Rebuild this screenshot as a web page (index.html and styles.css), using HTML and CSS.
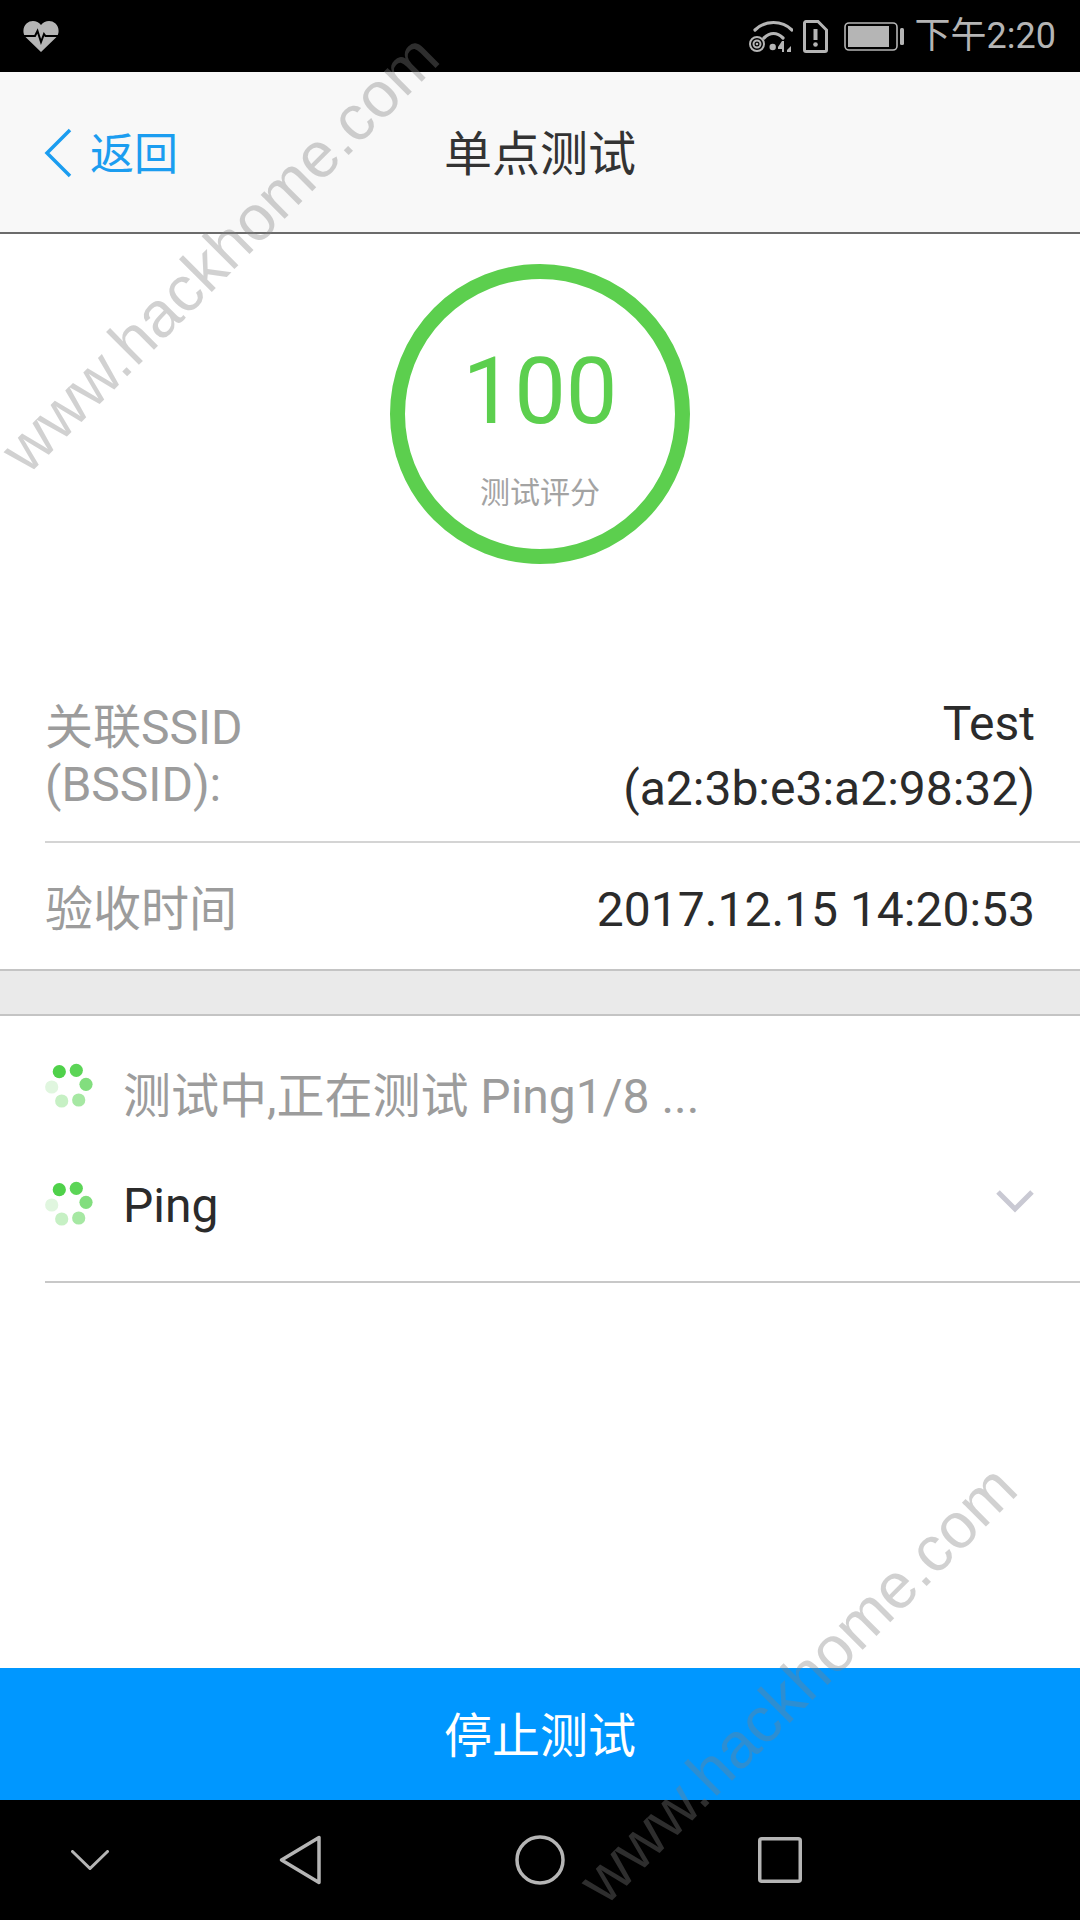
FILE: index.html
```html
<!DOCTYPE html>
<html lang="zh-CN">
<head>
<meta charset="utf-8">
<title>单点测试</title>
<link rel="stylesheet" href="styles.css">
</head>
<body>
<div class="screen">
  <div class="status">
    <svg class="heart" viewBox="0 0 36 32"><path d="M18 32 3 17.500C-1 13.500 0 6.500 3.500 3.500 8 -.5 14.500 .5 18 5 21.500 .5 28 -.5 32.500 3.500 36 6.500 37 13.500 33 17.500Z" fill="#b5b5b5"/><path d="M1 16h11l2.500-5 3.500 11 3-8 1.500 2H35" fill="none" stroke="#000" stroke-width="2"/></svg>
    <div class="status-right">
      <svg class="wifi" viewBox="0 0 44 32"><g fill="none" stroke="#b5b5b5" stroke-width="3.200" stroke-linecap="round"><path d="M6 10C16 0 33 0 43 10"/><path d="M15 18C21 12 28 12 34 18"/></g><g fill="none" stroke="#b5b5b5" stroke-width="2"><circle cx="8" cy="24" r="7"/><circle cx="8" cy="24" r="3.500"/></g><circle cx="8" cy="24" r="1.300" fill="#b5b5b5"/><circle cx="23.700" cy="27" r="3.200" fill="#b5b5b5"/><path d="M35 21v11h-2v-3h-4v-2l4-6zM38 30l4-4v6h-4z" fill="#b5b5b5"/></svg>
      <svg class="sim" viewBox="0 0 25 33"><path d="M3 1.500h12L23.500 10v20a1.500 1.500 0 0 1-1.500 1.500H3A1.500 1.500 0 0 1 1.500 30V3A1.500 1.500 0 0 1 3 1.500Z" fill="none" stroke="#b5b5b5" stroke-width="3"/><rect x="10.500" y="9" width="4" height="11" fill="#b5b5b5"/><circle cx="12.500" cy="24.500" r="2.300" fill="#b5b5b5"/></svg>
      <svg class="battery" viewBox="0 0 60 29"><rect x="1" y="1" width="52" height="27" rx="4" fill="none" stroke="#b5b5b5" stroke-width="1.600"/><rect x="4" y="4" width="41" height="21" fill="#b5b5b5"/><rect x="56" y="6" width="4" height="17" rx="1.500" fill="#b5b5b5"/></svg>
      <span class="time">下午2:20</span>
    </div>
  </div>

  <header class="nav">
    <div class="back">
      <svg class="back-icon" viewBox="0 0 28 50"><path d="M26 2 3 25l23 23" fill="none" stroke="#1b9df0" stroke-width="3.500"/></svg>
      <span class="back-text">返回</span>
    </div>
    <h1 class="title">单点测试</h1>
  </header>

  <section class="score">
    <div class="ring">
      <div class="ring-num">100</div>
      <div class="ring-label">测试评分</div>
    </div>
  </section>

  <section class="info">
    <div class="row row-ssid">
      <div class="label label-ssid">关联SSID<br>(BSSID):</div>
      <div class="value value-ssid">Test<br>(a2:3b:e3:a2:98:32)</div>
    </div>
    <div class="row row-time">
      <div class="label">验收时间</div>
      <div class="value">2017.12.15 14:20:53</div>
    </div>
  </section>

  <div class="band"></div>

  <section class="tests">
    <div class="test-line status-line">
      <svg class="spin" viewBox="0 0 48 48"><circle cx="14.300" cy="8.700" r="6.600" fill="#4fd14a"/><circle cx="31.300" cy="7.300" r="6.600" fill="#5cd557"/><circle cx="41" cy="21.300" r="6.600" fill="#82de7e"/><circle cx="33.700" cy="37" r="6.600" fill="#a6e8a3"/><circle cx="16.700" cy="38" r="6.600" fill="#c6f0c4"/><circle cx="6.700" cy="24" r="6.600" fill="#e0f6df"/></svg>
      <span class="status-text">测试中,正在测试 Ping1/8 ...</span>
    </div>
    <div class="test-line ping-line">
      <svg class="spin" viewBox="0 0 48 48"><circle cx="14.300" cy="8.700" r="6.600" fill="#4fd14a"/><circle cx="31.300" cy="7.300" r="6.600" fill="#5cd557"/><circle cx="41" cy="21.300" r="6.600" fill="#82de7e"/><circle cx="33.700" cy="37" r="6.600" fill="#a6e8a3"/><circle cx="16.700" cy="38" r="6.600" fill="#c6f0c4"/><circle cx="6.700" cy="24" r="6.600" fill="#e0f6df"/></svg>
      <span class="ping-text">Ping</span>
      <svg class="chev" viewBox="0 0 40 24"><path d="M3 3l17 17L37 3" fill="none" stroke="#c9c9d3" stroke-width="5"/></svg>
    </div>
  </section>

  <button class="stop" type="button">停止测试</button>

  <div class="sysnav">
    <svg class="sys sys-down" viewBox="0 0 38 20"><path d="M1.500 1.500 19 18.500 36.500 1.500" fill="none" stroke="#b5b5b5" stroke-width="3" stroke-linecap="round"/></svg>
    <svg class="sys sys-back" viewBox="0 0 42 50"><path d="M40 2.500v45L2.500 25Z" fill="none" stroke="#b5b5b5" stroke-width="3.500" stroke-linejoin="round"/></svg>
    <svg class="sys sys-home" viewBox="0 0 50 50"><circle cx="25" cy="25" r="23" fill="none" stroke="#b5b5b5" stroke-width="3.500"/></svg>
    <svg class="sys sys-recent" viewBox="0 0 44 46"><rect x="1.750" y="1.750" width="40.500" height="42.500" rx="2" fill="none" stroke="#b5b5b5" stroke-width="3.500"/></svg>
  </div>

  <div class="wm wm-top">www.hackhome.com</div>
  <div class="wm wm-bottom">www.hackhome.com</div>
</div>
</body>
</html>
```

FILE: styles.css
```css
* { box-sizing: border-box; }
html, body { margin: 0; padding: 0; }
body { font-family: Roboto, "Noto Sans CJK SC", sans-serif; background: #fff; }
.screen { position: relative; width: 1080px; height: 1920px; overflow: hidden; display: flex; flex-direction: column; background: #fff; }

.status { height: 72px; background: #000; display: flex; align-items: center; justify-content: space-between; padding: 0 24px 0 23px; flex: none; }
.heart { width: 36px; height: 32px; }
.status-right { display: flex; align-items: center; }
.wifi { width: 44px; height: 32px; margin-right: 10px; }
.sim { width: 25px; height: 33px; margin-right: 16px; }
.battery { width: 60px; height: 29px; margin-right: 11px; }
.time { font-size: 36px; color: #b5b5b5; line-height: 40px; }

.nav { position: relative; height: 162px; flex: none; background: #f8f8f8; border-bottom: 2px solid #6b6b6b; display: flex; align-items: center; justify-content: center; }
.back { position: absolute; left: 44px; top: 54px; display: flex; align-items: center; color: #1b9df0; font-size: 44px; line-height: 54px; }
.back-icon { width: 28px; height: 50px; margin-right: 18px; }
.back-text { position: relative; top: 2px; }
.title { margin: 0; font-size: 48px; font-weight: 400; color: #333; line-height: 60px; position: relative; top: 3px; }

.score { flex: none; height: 451px; padding-top: 30px; display: flex; justify-content: center; }
.ring { width: 300px; height: 300px; border-radius: 50%; border: 15px solid #5ccf4e; display: flex; flex-direction: column; align-items: center; }
.ring-num { font-size: 92px; line-height: 108px; color: #5ccf4e; margin-top: 59px; }
.ring-label { font-size: 30px; line-height: 40px; color: #a3a3a3; margin-top: 27px; }

.info { flex: none; padding-left: 45px; }
.row { display: flex; justify-content: space-between; padding-right: 45px; border-bottom: 2px solid #d4d4d4; }
.row-ssid { height: 158px; padding-top: 6px; }
.row-time { height: 126px; align-items: center; border-bottom: 0; padding-top: 6px; }
.label { font-size: 48px; color: #9c9c9c; line-height: 57px; }
.value { font-size: 48px; color: #2b2b2b; text-align: right; line-height: 65px; }
.label-ssid { padding-top: 8px; }

.band { flex: none; height: 47px; background: #eaeaea; border-top: 2px solid #c4c4c4; border-bottom: 2px solid #c4c4c4; }

.tests { flex: none; height: 267px; margin-left: 45px; border-bottom: 2px solid #c8c8c8; padding-top: 46px; }
.test-line { display: flex; align-items: center; height: 60px; position: relative; }
.ping-line { margin-top: 53px; }
.spin { width: 48px; height: 48px; margin-right: 30px; position: relative; top: -5px; }
.ping-line .spin { top: 0; }
.status-text { font-size: 48px; color: #9c9c9c; }
.ping-text { font-size: 48px; color: #2b2b2b; }
.chev { position: absolute; right: 45px; top: 14px; width: 40px; height: 24px; }

.stop { flex: none; margin-top: auto; height: 132px; width: 100%; background: #0097ff; border: 0; padding: 0 0 4px; color: #fff; font: 48px Roboto, "Noto Sans CJK SC", sans-serif; }

.sysnav { flex: none; height: 120px; background: #000; position: relative; }
.sys { position: absolute; }
.sys-down { left: 71px; top: 50px; width: 38px; height: 20px; }
.sys-back { left: 279px; top: 35px; width: 42px; height: 50px; }
.sys-home { left: 515px; top: 35px; width: 50px; height: 50px; }
.sys-recent { left: 758px; top: 37px; width: 44px; height: 46px; }

.wm { position: absolute; font-family: "Liberation Sans", sans-serif; font-size: 64px; line-height: 40px; color: rgba(128,128,128,.36); white-space: nowrap; transform: rotate(-45deg); transform-origin: center; pointer-events: none; width: 591px; text-align: center; }
.wm-top { left: -76px; top: 233px; }
.wm-bottom { left: 502px; top: 1664px; }
```
